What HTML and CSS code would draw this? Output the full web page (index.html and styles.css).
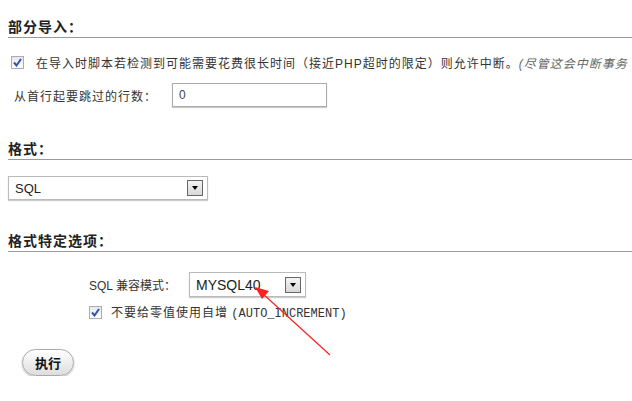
FILE: index.html
```html
<!DOCTYPE html>
<html lang="zh-CN">
<head>
    <meta charset="UTF-8">
    <title>导入</title>
    <link rel="stylesheet" href="styles.css">
</head>
<body>
    <div class="page">
        <h2 class="section-title">部分导入：</h2>
        <div class="row check-row">
            <span class="checkbox"><svg width="9" height="9" viewBox="0 0 9 9"><path d="M1 4.5 L3.5 7.5 L8 1" fill="none" stroke="#2a56b8" stroke-width="2"/></svg></span>
            <span class="nowrap spaced">在导入时脚本若检测到可能需要花费很长时间（接近PHP超时的限定）则允许中断。<i class="note">(尽管这会中断事务</i></span>
        </div>
        <div class="row skip-row">
            <label class="skip-label spaced">从首行起要跳过的行数：</label>
            <input class="text-input" type="text" value="0">
        </div>

        <h2 class="section-title">格式：</h2>
        <div class="select format-select">
            <span class="select-value">SQL</span>
            <span class="select-btn"></span>
        </div>

        <h2 class="section-title">格式特定选项：</h2>
        <div class="options">
            <div class="row compat-row">
                <label class="compat-label">SQL 兼容模式：</label>
                <div class="select compat-select">
                    <span class="select-value">MYSQL40</span>
                    <span class="select-btn"></span>
                </div>
            </div>
            <div class="row check-row small">
                <span class="checkbox"><svg width="9" height="9" viewBox="0 0 9 9"><path d="M1 4.5 L3.5 7.5 L8 1" fill="none" stroke="#2a56b8" stroke-width="2"/></svg></span>
                <span><span class="spaced">不要给零值使用自增</span> <code>(AUTO_INCREMENT)</code></span>
            </div>
        </div>

        <button class="go-btn" type="button">执行</button>
    </div>

    <svg class="arrow" width="632" height="401" viewBox="0 0 632 401">
        <line x1="330" y1="355" x2="262" y2="293" stroke="#ff2020" stroke-width="1.2"/>
        <path d="M255 287 L269 291 L262 299 Z" fill="#ff2020"/>
    </svg>
</body>
</html>
```

FILE: styles.css
```css
body {
    margin: 0;
    font-family: "Liberation Sans", "Noto Sans CJK SC", sans-serif;
    font-size: 12px;
    color: #333;
    background: #fff;
    overflow: hidden;
}
.page {
    padding: 18px 0 0 8px;
    width: 624px;
}
.section-title {
    font-size: 14px;
    font-weight: bold;
    letter-spacing: 1px;
    color: #222;
    margin: 0 0 12px 0;
    padding-bottom: 1px;
    line-height: 18px;
    border-bottom: 1px solid #999;
}
.row {
    display: flex;
    align-items: center;
}
.nowrap {
    white-space: nowrap;
}
.spaced {
    letter-spacing: 1px;
}
.check-row {
    height: 24px;
    padding-left: 3px;
}
.checkbox {
    width: 11px;
    height: 11px;
    border: 1px solid #aab;
    background: linear-gradient(#e8e8e8, #fff);
    margin-right: 12px;
    display: flex;
    align-items: center;
    justify-content: center;
    flex: none;
}
.note {
    color: #666;
}
.skip-row {
    margin-top: 9px;
    margin-bottom: 33px;
}
.skip-label {
    padding-left: 6px;
    width: 158px;
}
.text-input {
    width: 155px;
    height: 24px;
    box-sizing: border-box;
    border: 1px solid #aaa;
    box-shadow: 0 1px 1px #ccc;
    padding: 0 6px;
    font-family: inherit;
    font-size: 12px;
    color: #444;
}
.select {
    display: flex;
    align-items: center;
    justify-content: space-between;
    box-sizing: border-box;
    border: 1px solid #bbb;
    box-shadow: 0 1px 1px #ccc;
    background: #fff;
    padding: 0 4px 0 6px;
    font-size: 13px;
    color: #222;
}
.format-select {
    width: 200px;
    height: 24px;
    margin-top: 16px;
    margin-bottom: 32px;
}
.select-btn {
    width: 14px;
    height: 14px;
    border: 1px solid #666;
    background: linear-gradient(#f4f4f4, #d8d8d8);
    position: relative;
}
.select-btn::after {
    content: "";
    position: absolute;
    left: 4px;
    top: 5px;
    border-left: 3px solid transparent;
    border-right: 3px solid transparent;
    border-top: 4px solid #000;
}
.options {
    padding: 8px 0 0 81px;
}
.compat-label {
    width: 100px;
}
.compat-select {
    width: 117px;
    height: 25px;
    font-size: 14px;
}
.small {
    margin-top: 6px;
    padding-left: 0;
    height: 18px;
}
.small .checkbox {
    margin-right: 9px;
}
code {
    font-family: "Liberation Mono", monospace;
    font-size: 12px;
}
.go-btn {
    margin: 28px 0 0 14px;
    width: 52px;
    height: 27px;
    border: 1px solid #aaa;
    border-radius: 14px;
    background: linear-gradient(#fff, #ddd);
    font-family: "Liberation Sans", "Noto Sans CJK SC", sans-serif;
    font-size: 13px;
    font-weight: bold;
    color: #111;
    box-shadow: 0 1px 2px #bbb;
}
.arrow {
    position: absolute;
    left: 0;
    top: 0;
    pointer-events: none;
}
```
